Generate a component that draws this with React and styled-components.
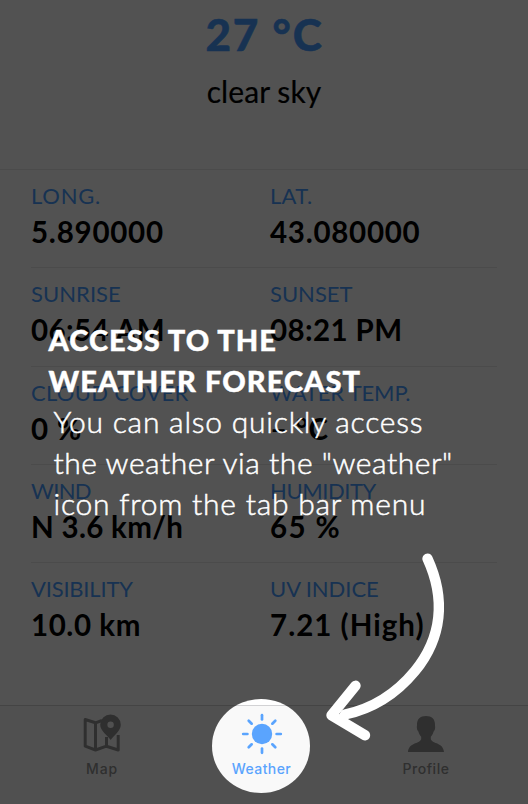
import React from "react";
import styled, { createGlobalStyle } from "styled-components";

const BLUE = "#5aa4fe";
const DEEP_BLUE = "#4a9cff";

const GlobalStyle = createGlobalStyle`
  *, *::before, *::after { box-sizing: border-box; }
  body { margin: 0; background: #fff; font-family: Lato, sans-serif; font-kerning: normal; }
`;

const Screen = styled.div`
  position: relative;
  display: flex;
  flex-direction: column;
  width: 528px;
  height: 804px;
  overflow: hidden;
  background: #fff;
`;

const Summary = styled.header`
  display: flex;
  flex-direction: column;
  align-items: center;
  flex: none;
  height: 170px;
  padding-top: 10px;
  border-bottom: 1px solid #e8e8ea;
`;

const Temperature = styled.div`
  font-size: 44px;
  line-height: 48px;
  font-weight: 900;
  letter-spacing: 1.85px;
  color: ${DEEP_BLUE};
  -webkit-text-stroke: 0.5px ${DEEP_BLUE};
  padding-left: 1px;
`;

const Condition = styled.div`
  margin-top: 15px;
  font-size: 30px;
  line-height: 36px;
  letter-spacing: 0.1px;
  color: #000;
  -webkit-text-stroke: 0.2px #000;
`;

const Details = styled.main`
  flex: 1;
  padding: 0 31px;
`;

const DetailRow = styled.section`
  display: grid;
  grid-template-columns: 239px 1fr;
  height: 98.3px;
  padding-top: 12px;
  border-bottom: 1px solid #e8e8ea;
  &:last-child { border-bottom: 0; }
`;

const Label = styled.div`
  font-size: 22px;
  line-height: 28px;
  color: ${DEEP_BLUE};
  white-space: nowrap;
  letter-spacing: ${(p) => p.$track}px;
`;

const Value = styled.div`
  margin-top: 2px;
  font-size: 29.5px;
  line-height: 40px;
  font-weight: 700;
  color: #000;
  white-space: nowrap;
  letter-spacing: ${(p) => p.$track}px;
`;

const TabBar = styled.nav`
  display: grid;
  grid-template-columns: 204px 115px 214px;
  flex: none;
  height: 99px;
  background: #f9f9f9;
  border-top: 1px solid #d2d2d4;
`;

const Tab = styled.div`
  display: flex;
  flex-direction: column;
  align-items: center;
  padding-top: 7px;
  color: ${(p) => (p.$active ? BLUE : "#929292")};
  svg { display: block; }
`;

const TabLabel = styled.span`
  margin-top: 5px;
  font: 500 14px/18px Inter, sans-serif;
  letter-spacing: ${(p) => p.$track}px;
`;

const CoachMark = styled.div`
  position: absolute;
  inset: 0;
  overflow: hidden;
  padding: 318.5px 48px 0 48.5px;
  color: #fff;
`;

const Spotlight = styled.div`
  position: absolute;
  left: 212px;
  top: 699px;
  width: 98px;
  height: 94px;
  border-radius: 50%;
  box-shadow: 0 0 0 2000px rgba(0, 0, 0, 0.68);
`;

const CoachTitle = styled.h1`
  position: relative;
  margin: 0;
  font-size: 29px;
  line-height: 41px;
  font-weight: 900;
  letter-spacing: 1.02px;
  -webkit-text-stroke: 0.4px #fff;
`;

const CoachText = styled.p`
  position: relative;
  margin: 0.5px 0 0 5px;
  font-size: 30px;
  line-height: 41px;
  font-weight: 300;
  -webkit-text-stroke: 0.5px #fff;
`;

const Line = styled.span`
  display: block;
  white-space: nowrap;
  letter-spacing: ${(p) => p.$track}px;
`;

const Arrow = styled.svg`
  position: absolute;
  left: 320px;
  top: 545px;
`;

const rows = [
  [["LONG.", 0.75, "5.890000", 0.76], ["LAT.", 0.31, "43.080000", 0.72]],
  [["SUNRISE", 0.05, "06:54 AM", 0.42], ["SUNSET", 0, "08:21 PM", 0.38]],
  [["CLOUD COVER", 0.29, "0 %", 0.9], ["WATER TEMP.", -0.15, "– °C", 0.65]],
  [["WIND", -0.65, "N 3.6 km/h", 0.3], ["HUMIDITY", -0.42, "65 %", 1.37]],
  [["VISIBILITY", -0.2, "10.0 km", 0.56], ["UV INDICE", -0.05, "7.21 (High)", 1.02]],
];

const MapIcon = () => (
  <svg width="40" height="42" viewBox="0 0 40 42" fill="none" stroke="currentColor">
    <path
      d="M20 7.5L13.5 9.8L3.2 6.5V33.2L13.5 37L24.5 33.2L36.2 37V22M13.5 9.8V37M24.5 24V33.2"
      strokeWidth="3"
      strokeLinejoin="round"
    />
    <path
      fillRule="evenodd"
      fill="currentColor"
      stroke="none"
      d="M28.7 27C25.5 22.2 18.2 18 18.2 11.8A10.3 10.3 0 0 1 38.8 11.8C38.8 18 32 22.2 28.7 27ZM28.6 8.6A3.2 3.2 0 1 0 28.6 15A3.2 3.2 0 1 0 28.6 8.6Z"
    />
  </svg>
);

const SunIcon = () => (
  <svg width="42" height="42" viewBox="-21 -21 42 42">
    <circle r="10.2" fill="currentColor" />
    {[0, 45, 90, 135, 180, 225, 270, 315].map((a) => (
      <path
        key={a}
        d="M14.6 0H18.8"
        transform={`rotate(${a})`}
        stroke="currentColor"
        strokeWidth="2.7"
        strokeLinecap="round"
      />
    ))}
  </svg>
);

const PersonIcon = () => (
  <svg width="38" height="42" viewBox="0 0 38 42" fill="currentColor">
    <path d="M19 3C24.8 3 28.2 6.2 28 12C28 13.2 28.3 13.6 28.1 15.2C27.9 17 27.2 17.8 26.6 18.6C26 21 25 22.5 23.8 23.8V26.2C25.8 31.2 36.2 29.2 37 39H1C1.8 29.2 12.2 31.2 14.2 26.2V23.8C13 22.5 12 21 11.4 18.6C10.8 17.8 10.1 17 9.9 15.2C9.7 13.6 10 13.2 10 12C9.8 6.2 13.2 3 19 3Z" />
  </svg>
);

export default function App() {
  return (
    <Screen>
      <GlobalStyle />
      <Summary>
        <Temperature>27 °C</Temperature>
        <Condition>clear sky</Condition>
      </Summary>
      <Details>
        {rows.map((cells, i) => (
          <DetailRow key={i}>
            {cells.map(([label, labelTrack, value, valueTrack]) => (
              <div key={label}>
                <Label $track={labelTrack}>{label}</Label>
                <Value $track={valueTrack}>{value}</Value>
              </div>
            ))}
          </DetailRow>
        ))}
      </Details>
      <TabBar>
        <Tab>
          <MapIcon />
          <TabLabel $track={0.85}>Map</TabLabel>
        </Tab>
        <Tab $active>
          <SunIcon />
          <TabLabel $track={0.4}>Weather</TabLabel>
        </Tab>
        <Tab>
          <PersonIcon />
          <TabLabel $track={0.55}>Profile</TabLabel>
        </Tab>
      </TabBar>
      <CoachMark>
        <Spotlight />
        <CoachTitle>
          <Line $track={1.02}>ACCESS TO THE</Line>
          <Line $track={1.06}>WEATHER FORECAST</Line>
        </CoachTitle>
        <CoachText>
          <Line $track={0.78}>You can also quickly access</Line>
          <Line $track={0.54}>the weather via the "weather"</Line>
          <Line $track={0.76}>icon from the tab bar menu</Line>
        </CoachText>
        <Arrow
          width="130"
          height="205"
          viewBox="320 545 130 205"
          fill="none"
          stroke="#fff"
          strokeWidth="10.4"
          strokeLinecap="round"
          strokeLinejoin="round"
        >
          <path d="M427.5 558.7C446 599 442 638 415 671C396 694 371 709 345 714.5" />
          <path d="M355.5 685.8L331.5 715.3L365 735.3" />
        </Arrow>
      </CoachMark>
    </Screen>
  );
}
